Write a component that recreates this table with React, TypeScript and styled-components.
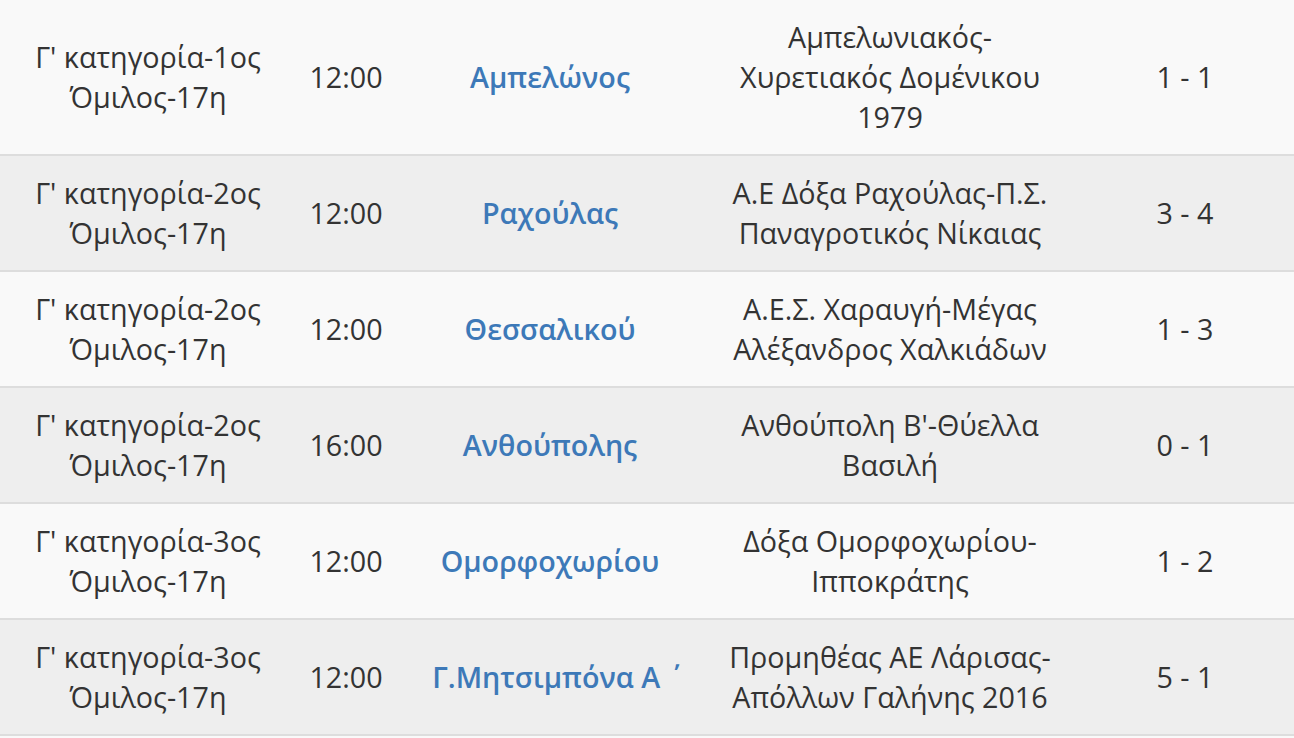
import styled, { createGlobalStyle } from 'styled-components';

const GlobalStyle = createGlobalStyle`
  html, body {
    margin: 0;
    padding: 0;
    background: #f9f9f9;
  }
  body {
    font-family: "Open Sans", "Noto Sans", sans-serif;
  }
  *, *::before, *::after {
    box-sizing: border-box;
  }
`;

const Table = styled.table`
  width: 100%;
  border-collapse: collapse;
  table-layout: fixed;
  font-size: 28.7px;
  line-height: 40px;
  color: #333;
`;

const Row = styled.tr<{ $even: boolean }>`
  background: ${(p) => (p.$even ? '#eeeeee' : '#f9f9f9')};
  border-bottom: 2px solid #dddddd;
`;

const Cell = styled.td<{ $width: number }>`
  width: ${(p) => p.$width}px;
  padding: 17px 12px;
  text-align: center;
  vertical-align: middle;
`;

const GroundLink = styled.a`
  color: #3d79b8;
  font-weight: 600;
  text-decoration: none;
`;

type Match = {
  league: string;
  time: string;
  ground: string;
  teams: string;
  score: string;
};

const matches: Match[] = [
  { league: "Γ' κατηγορία-1ος Όμιλος-17η", time: '12:00', ground: 'Αμπελώνος', teams: 'Αμπελωνιακός-Χυρετιακός Δομένικου 1979', score: '1 - 1' },
  { league: "Γ' κατηγορία-2ος Όμιλος-17η", time: '12:00', ground: 'Ραχούλας', teams: 'Α.Ε Δόξα Ραχούλας-Π.Σ. Παναγροτικός Νίκαιας', score: '3 - 4' },
  { league: "Γ' κατηγορία-2ος Όμιλος-17η", time: '12:00', ground: 'Θεσσαλικού', teams: 'Α.Ε.Σ. Χαραυγή-Μέγας Αλέξανδρος Χαλκιάδων', score: '1 - 3' },
  { league: "Γ' κατηγορία-2ος Όμιλος-17η", time: '16:00', ground: 'Ανθούπολης', teams: "Ανθούπολη Β'-Θύελλα Βασιλή", score: '0 - 1' },
  { league: "Γ' κατηγορία-3ος Όμιλος-17η", time: '12:00', ground: 'Ομορφοχωρίου', teams: 'Δόξα Ομορφοχωρίου-Ιπποκράτης', score: '1 - 2' },
  { league: "Γ' κατηγορία-3ος Όμιλος-17η", time: '12:00', ground: 'Γ.Μητσιμπόνα Α ΄', teams: 'Προμηθέας ΑΕ Λάρισας-Απόλλων Γαλήνης 2016', score: '5 - 1' },
];

export default function App() {
  return (
    <>
      <GlobalStyle />
      <Table>
        <tbody>
          {matches.map((m, i) => (
            <Row key={i} $even={i % 2 === 1}>
              <Cell $width={296}>{m.league}</Cell>
              <Cell $width={100}>{m.time}</Cell>
              <Cell $width={308}>
                <GroundLink href="#">{m.ground}</GroundLink>
              </Cell>
              <Cell $width={372}>{m.teams}</Cell>
              <Cell $width={218}>{m.score}</Cell>
            </Row>
          ))}
        </tbody>
      </Table>
    </>
  );
}
